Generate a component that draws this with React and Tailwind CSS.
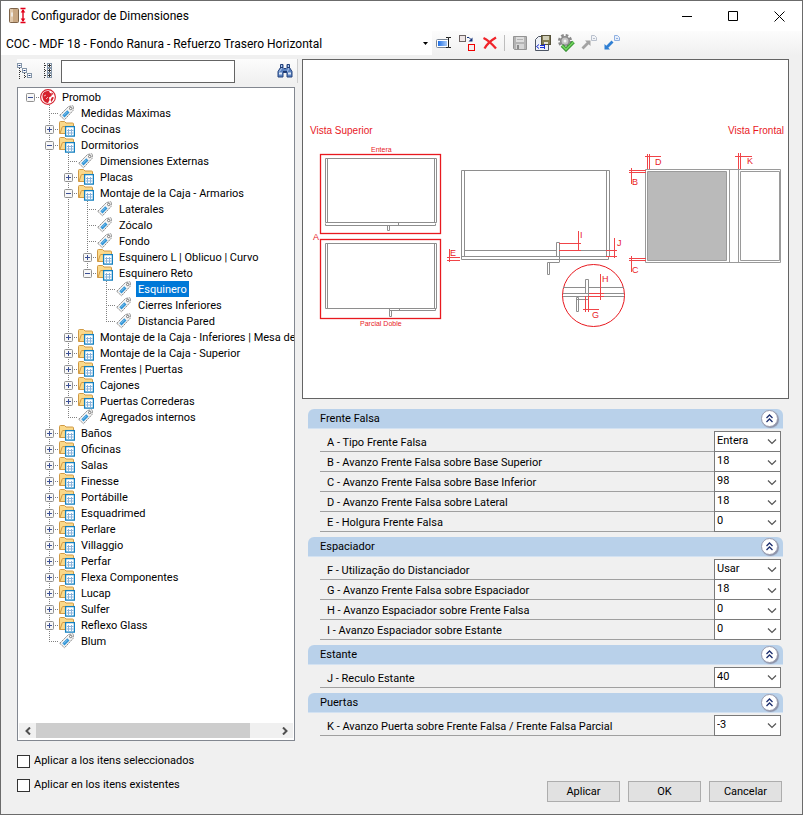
import React, { useState } from 'react';

const tag = (label) => ({ label, type: 'tag' });
const folder = (label, children) => ({ label, type: 'folder', children });

const tree = [
    {
        label: 'Promob',
        type: 'root',
        children: [
            tag('Medidas Máximas'),
            folder('Cocinas'),
            folder('Dormitorios', [
                tag('Dimensiones Externas'),
                folder('Placas'),
                folder('Montaje de la Caja - Armarios', [
                    tag('Laterales'),
                    tag('Zócalo'),
                    tag('Fondo'),
                    folder('Esquinero L | Oblicuo | Curvo'),
                    folder('Esquinero Reto', [
                        tag('Esquinero'),
                        tag('Cierres Inferiores'),
                        tag('Distancia Pared'),
                    ]),
                ]),
                folder('Montaje de la Caja - Inferiores | Mesa de'),
                folder('Montaje de la Caja - Superior'),
                folder('Frentes | Puertas'),
                folder('Cajones'),
                folder('Puertas Correderas'),
                tag('Agregados internos'),
            ]),
            folder('Baños'),
            folder('Oficinas'),
            folder('Salas'),
            folder('Finesse'),
            folder('Portábille'),
            folder('Esquadrimed'),
            folder('Perlare'),
            folder('Villaggio'),
            folder('Perfar'),
            folder('Flexa Componentes'),
            folder('Lucap'),
            folder('Sulfer'),
            folder('Reflexo Glass'),
            tag('Blum'),
        ],
    },
];

const groups = [
    {
        title: 'Frente Falsa',
        rows: [
            ['A - Tipo Frente Falsa', 'Entera'],
            ['B - Avanzo Frente Falsa sobre Base Superior', '18'],
            ['C - Avanzo Frente Falsa sobre Base Inferior', '98'],
            ['D - Avanzo Frente Falsa sobre Lateral', '18'],
            ['E - Holgura Frente Falsa', '0'],
        ],
    },
    {
        title: 'Espaciador',
        rows: [
            ['F - Utilização do Distanciador', 'Usar'],
            ['G - Avanzo Frente Falsa sobre Espaciador', '18'],
            ['H - Avanzo Espaciador sobre Frente Falsa', '0'],
            ['I - Avanzo Espaciador sobre Estante', '0'],
        ],
    },
    { title: 'Estante', rows: [['J - Reculo Estante', '40']] },
    { title: 'Puertas', rows: [['K - Avanzo Puerta sobre Frente Falsa / Frente Falsa Parcial', '-3']] },
];

/* ---------- icons ---------- */

const AppIcon = () => (
    <svg width="18" height="18" viewBox="0 0 18 18">
        <rect x="1.500" y="1.500" width="9" height="14" rx="1" fill="#c9a883" stroke="#7d6348" />
        <rect x="2" y="2" width="3" height="13" fill="#dfc7aa" />
        <path d="M4 5.500v4" stroke="#f6f6f6" strokeWidth="1.500" />
        <path d="M12.500 1.500h5M12.500 15.500h5M15 3v11" stroke="#e2001a" strokeWidth="1.400" />
        <path d="M12.700 5.500l2.300-3.500 2.300 3.500zM12.700 11.500l2.300 3.500 2.300-3.500z" fill="#e2001a" />
    </svg>
);

const RenameIcon = () => (
    <svg width="16" height="16" viewBox="0 0 16 16">
        <defs>
            <linearGradient id="field">
                <stop offset="0" stopColor="#1f6fe5" />
                <stop offset="1" stopColor="#a9cbf8" />
            </linearGradient>
        </defs>
        <rect x="0.500" y="4.500" width="12" height="8" rx="1" fill="#fff" stroke="#7a8696" />
        <rect x="2" y="6" width="9" height="5" fill="url(#field)" />
        <path d="M10 2.500h2.500v10H10M15 2.500h-2.500M15 12.500h-2.500" stroke="#222" fill="none" />
    </svg>
);

const ReplaceIcon = () => (
    <svg width="18" height="18" viewBox="0 0 18 18">
        <rect x="1.500" y="1.500" width="6" height="6" fill="#eee6e6" stroke="#6d6464" />
        <rect x="10.500" y="10.500" width="6" height="6" fill="#f4eeee" stroke="#f00000" />
        <path d="M9 3.500h2l2 2" stroke="#14337c" fill="none" />
        <path d="M14.500 3.500v4h-4z" fill="#14337c" />
    </svg>
);

const DeleteIcon = () => (
    <svg width="16" height="16" viewBox="0 0 16 16">
        <path d="M1.500 3C6 5 10 9 14 13.500M14 2.500C8 6 5 9 2.500 13.500" stroke="#f0242a" strokeWidth="2.300" fill="none" />
    </svg>
);

const SaveIcon = () => (
    <svg width="16" height="16" viewBox="0 0 16 16">
        <path d="M1.500 1.500h13v13h-12l-1-1z" fill="#b4b4b4" stroke="#949494" />
        <rect x="4" y="2" width="8" height="5" fill="#dedede" />
        <path d="M5 4.500h6" stroke="#b4b4b4" />
        <rect x="4" y="9" width="8" height="5" fill="#d6d6d6" />
        <rect x="5" y="10" width="2" height="4" fill="#8a8a8a" />
    </svg>
);

const SaveBinaryIcon = () => (
    <svg width="18" height="18" viewBox="0 0 18 18">
        <path d="M4.500 2.500h10v14h-13v-11z" fill="#eef1f6" stroke="#4d5564" />
        <rect x="7.500" y="1.500" width="9" height="9" fill="#827c52" stroke="#55513a" />
        <rect x="9" y="2" width="6" height="4" fill="#cfcdb6" />
        <rect x="10" y="8" width="4" height="2" fill="#e4e2d0" />
        <path d="M5 10.500l-2.500 2 2.500 2M6 11.500h4M6 13.500h4M10.500 10v5" stroke="#1b2fd6" fill="none" />
    </svg>
);

const GearCheckIcon = () => (
    <svg width="18" height="18" viewBox="0 0 18 18">
        <circle cx="8" cy="7" r="5.800" fill="none" stroke="#8b8b8b" strokeWidth="2.600" strokeDasharray="2.600 1.955" />
        <circle cx="8" cy="7" r="4.300" fill="#c4c4c4" stroke="#8b8b8b" strokeWidth="1.600" />
        <circle cx="8" cy="7" r="1.500" fill="#f6f6f6" />
        <path d="M5 11.500l4 4 7.500-7.500" stroke="#2c8a2a" strokeWidth="3.600" fill="none" />
        <path d="M5 11.500l4 4 7.500-7.500" stroke="#6fcf5c" strokeWidth="1.800" fill="none" />
    </svg>
);

const ExportIcon = () => (
    <svg width="18" height="18" viewBox="0 0 18 18">
        <path d="M11.500 1.500h3l2 2v3h-5z" fill="#f2f4f8" stroke="#b9c0cc" />
        <path d="M13 4.500h2" stroke="#b9c0cc" />
        <path d="M5 6.500h5.500V12L8.700 10.200 3.500 15.500l-2-2 5.200-5.300z" fill="#a3a3a3" />
    </svg>
);

const ImportIcon = () => (
    <svg width="18" height="18" viewBox="0 0 18 18">
        <path d="M11.500 1.500h3l2 2v3h-5z" fill="#e6eefb" stroke="#8fb0e0" />
        <path d="M13 4.500h2" stroke="#8fb0e0" />
        <path d="M7 15.500H1.500V10l1.800 1.800 5.200-5.300 2 2-5.200 5.300z" fill="#2f7fd3" />
    </svg>
);

const CollapseAllIcon = () => (
    <svg width="16" height="16" viewBox="0 0 16 16">
        <path d="M2.500 5v11M3 8.500h3M7.500 10v5M8 13.500h3" stroke="#333" strokeDasharray="1 1" fill="none" />
        <g fill="#fff" stroke="#8495a8">
            <rect x="0.500" y="0.500" width="4" height="4" />
            <rect x="5.500" y="5.500" width="4" height="4" />
            <rect x="10.500" y="10.500" width="4" height="4" />
        </g>
        <path d="M1.500 2.500h2M6.500 7.500h2M11.500 12.500h2" stroke="#1f3d7a" />
    </svg>
);

const ExpandAllIcon = () => (
    <svg width="10" height="16" viewBox="0 0 10 16">
        <path d="M1.500 0v16M2 2.500h2M2 7.500h2M2 12.500h2" stroke="#333" strokeDasharray="1 1" fill="none" />
        <g fill="#fff" stroke="#8495a8">
            <rect x="4.500" y="0.500" width="4" height="4" />
            <rect x="4.500" y="5.500" width="4" height="4" />
            <rect x="4.500" y="10.500" width="4" height="4" />
        </g>
        <path d="M5 2.500h3M5 7.500h3M5 12.500h3M6.500 1v3M6.500 6v3M6.500 11v3" stroke="#333" />
    </svg>
);

const BinocularsIcon = () => (
    <svg width="16" height="16" viewBox="0 0 16 16">
        <path d="M3.500 1.500h2.500v3L7 5.500h2l1-1v-3h2.500v3l2.500 4v5.500h-5V9.500H6V14H1V8.500l2.500-4z" fill="#5b82c0" stroke="#24427c" />
        <path d="M4.500 2v3.500l-2 3M11.500 2v3.500l-1 3" stroke="#b5cbee" fill="none" />
        <path d="M2 10.500h3M11 10.500h3" stroke="#dfe9f8" strokeWidth="2" />
        <path d="M3 4.500h3M10 4.500h3M6 8.500h4" stroke="#1d386e" />
    </svg>
);

const RootIcon = () => (
    <svg width="16" height="16" viewBox="0 0 16 16">
        <circle cx="8" cy="8" r="7.400" fill="#fff" stroke="#d5202c" strokeWidth="1.100" />
        <path d="M2.500 6C3 3 6 1.500 9 2l1 2 2 .5-.5 2.500-2.500 1.500L9.500 11 8 14C5 14 2 11 2.500 6z" fill="#d5202c" />
        <path d="M11.500 3l2 2-1 1zM12 8l2 .5-2.500 4.500-1-2z" fill="#d5202c" />
        <path d="M4 7l2-1M6 10l2-2" stroke="#f7b5b8" />
    </svg>
);

const FolderIcon = () => (
    <svg width="16" height="16" viewBox="0 0 16 16">
        <path d="M0.500 12.500v-11q0-1 1-1h4l1.500 1.500h6.500q1 0 1 1v9.500z" fill="#fbd98a" stroke="#d09a45" />
        <path d="M1 12.500L3 6.500q.3-1 1-1h9" fill="none" stroke="#d09a45" />
        <rect x="6.600" y="5.600" width="8.800" height="9.500" fill="#fff" stroke="#1480c0" strokeWidth="1.300" />
        <path d="M9.500 8v6M12.500 8v6M8 9.500h6.500M8 12h6.500" stroke="#8bb4dc" />
    </svg>
);

const TagIcon = () => (
    <svg width="16" height="16" viewBox="0 0 16 16">
        <path d="M0.800 10.300L9.500 1.500 13.500.8q1 0 1 1L14 5.500 5.500 14.800z" fill="#f4f4f4" stroke="#8a8a8a" strokeDasharray="2 .6" />
        <path d="M3.300 10.300l5-5 2.200 2.200-5 5z" fill="#2d93d6" />
        <path d="M4.800 10.500l3.700-3.700" stroke="#8cc7ee" />
        <circle cx="11.700" cy="3.500" r="1.200" fill="#fff" stroke="#777" />
    </svg>
);

const nodeIcons = { root: RootIcon, folder: FolderIcon, tag: TagIcon };

/* ---------- tree ---------- */

const Guide = ({ up, down, across, sign }) => (
    <svg width="19" height="16" viewBox="0 0 19 16" className="shrink-0">
        <g stroke="#808080" strokeDasharray="1 1" fill="none">
            {up && <path d="M9.500 0v8" />}
            {down && <path d="M9.500 8v8" />}
            {across && <path d="M9 8.500h10" />}
        </g>
        {sign && (
            <>
                <rect x="5.500" y="4.500" width="8" height="8" rx="1" fill="#f7f7f7" stroke="#919191" />
                <path d={sign === '+' ? 'M7 8.500h5M9.500 6v5' : 'M7 8.500h5'} stroke="#3b4f94" />
            </>
        )}
    </svg>
);

const TreeNode = ({ node, trail, first, last, selected, onSelect }) => {
    const [open, setOpen] = useState(Boolean(node.children));
    const Icon = nodeIcons[node.type];
    const isRoot = trail.length === 0;
    const sign = node.type === 'tag' ? null : open ? '-' : '+';
    const active = selected === node.label;

    return (
        <li>
            <div className="flex h-4 items-center" onDoubleClick={() => setOpen(!open)}>
                {trail.map((line, i) => <Guide key={i} up={line} down={line} />)}
                <Guide up={!(isRoot && first)} down={!last} across sign={sign} />
                <span className="w-5 shrink-0"><Icon /></span>
                <button
                    onClick={() => onSelect(node.label)}
                    className={`h-4 px-[2px] text-[11px] leading-[18px] whitespace-nowrap ${active ? 'bg-[#0078d7] text-white' : 'text-black'}`}
                >
                    {node.label}
                </button>
            </div>
            {open && node.children && (
                <ul>
                    {node.children.map((child, i) => (
                        <TreeNode
                            key={child.label}
                            node={child}
                            trail={[...trail, !last]}
                            first={i === 0}
                            last={i === node.children.length - 1}
                            selected={selected}
                            onSelect={onSelect}
                        />
                    ))}
                </ul>
            )}
        </li>
    );
};

/* ---------- drawing of the cabinet ---------- */

const Diagram = () => (
    <svg viewBox="303 60 485 338" className="block w-full font-['Liberation_Sans',Arial,sans-serif]">
        <g fill="#e8191f">
            <text x="310" y="134" fontSize="10">Vista Superior</text>
            <text x="728" y="134" fontSize="10">Vista Frontal</text>
            <text x="371" y="152" fontSize="7">Entera</text>
            <text x="360" y="326" fontSize="7">Parcial Doble</text>
            <g fontSize="9">
                <text x="313" y="240">A</text>
                <text x="450" y="256">E</text>
                <text x="580" y="238">I</text>
                <text x="617" y="246">J</text>
                <text x="602" y="282">H</text>
                <text x="592" y="318">G</text>
                <text x="632" y="185">B</text>
                <text x="632" y="273">C</text>
                <text x="655" y="165">D</text>
                <text x="747" y="164">K</text>
            </g>
        </g>

        <g fill="none" stroke="#e8191f">
            <rect x="320.500" y="154.500" width="120" height="79" strokeWidth="1.300" />
            <rect x="320.500" y="239.500" width="120" height="79" strokeWidth="1.300" />
            <circle cx="593.500" cy="295.500" r="31" />
        </g>

        {/* top views */}
        <g fill="none" stroke="#8e8e8e">
            <path d="M325.500 158.500h111v64h-111zM327.500 158.500v64M434.500 158.500v64" />
            <path d="M325.500 223.500v2h110v-2M398.500 223v2M387.500 225.500h2v5h-2z" />
            <path d="M325.500 243.500h111v65h-111zM327.500 243.500v65M434.500 243.500v65" />
            <path d="M389.500 308.500v2h46v-2M399.500 309v1M389.500 310.500h2v6h-2z" />
        </g>

        {/* section */}
        <g fill="none" stroke="#8e8e8e">
            <path d="M461.500 257v-86.500h148v86.500M464.500 171v86M606.500 171v86" />
            <path d="M464 250.500h92M560 250.500h46M461 256.500h145M461.500 257v2.500h147v-2.500" />
            <path d="M556.500 256.500v-14h3v19.500M559.500 262.500h-12v12h2v-12" />
            <path d="M563 287.500h22M588 287.500h36M563 293.500h61M563 296.500h61" />
            <path d="M585.500 293.500v-14h3v17M576.500 311.500v-14h2v14zM576.500 299.500h12" />
        </g>

        {/* front view */}
        <g fill="none" stroke="#9a9a9a">
            <path d="M647.500 171.500h79v89h-79z" fill="#bababa" />
            <path d="M645.500 169.500h135v93h-135zM729.500 169.500v93M738.500 169.500v93M740.500 171.500h39v89h-39z" />
        </g>

        {/* dimension marks */}
        <g fill="none" stroke="#f04448">
            <path d="M449.500 249v13M447 257.500h13M447 260.500h13" />
            <path d="M578.500 231v20M559 243.500h22M559 250.500h22" />
            <path d="M614.500 238v20M606 250.500h11M606 256.500h11" />
            <path d="M600.500 274v26M589 293.500h15M589 296.500h15" />
            <path d="M585.500 296v16M588.500 296v16M583 309.500h16" />
            <path d="M631.500 168v16M629 170.500h17M629 172.500h17" />
            <path d="M631.500 256v16M629 258.500h17M629 260.500h17" />
            <path d="M647.500 154v15M649.500 154v15M645 156.500h16" />
            <path d="M738.500 153v16M740.500 153v16M735 156.500h17" />
        </g>
    </svg>
);

/* ---------- properties ---------- */

const PropertyGroup = ({ title, rows }) => {
    const [open, setOpen] = useState(true);

    return (
        <section>
            <header className="flex h-5 items-center justify-between rounded-t-md border-b border-[#d3e2f2] bg-[#b9d1ea] pr-[5px] pl-3">
                <h2 className="text-[11px] leading-5">{title}</h2>
                <button
                    aria-label={title}
                    onClick={() => setOpen(!open)}
                    className="flex h-[17px] w-[17px] items-center justify-center rounded-full border border-[#9a9db0] bg-white shadow-[1px_1px_1px_#8a8fa5]"
                >
                    <svg width="9" height="9" viewBox="0 0 9 9" fill="none" stroke="#1d2f6f" strokeWidth="1.300">
                        <path d="M1.500 4l3-3 3 3M1.500 8l3-3 3 3" />
                    </svg>
                </button>
            </header>
            {open && (
                <div className="mt-[2px] mr-[2px] ml-3 border-t border-transparent">
                    {rows.map(([label, value], i) => {
                        const id = `prop-${label[0]}`;
                        return (
                            <div key={id} className="flex h-5 items-stretch">
                                <label htmlFor={id} className="flex-1 border-b border-[#a0a0a0] pl-[7px] text-[11px] leading-[22px]">
                                    {label}
                                </label>
                                <div className={`relative w-[67px] ${i === 0 ? '-mt-px' : ''}`}>
                                    <select
                                        id={id}
                                        defaultValue={value}
                                        className={`block h-full w-full appearance-none border-x border-b border-[#7a7a7a] bg-white pb-[2px] pl-[2px] text-[11px] leading-4 outline-none ${i === 0 ? 'border-t' : ''}`}
                                    >
                                        <option>{value}</option>
                                    </select>
                                    <svg width="10" height="6" viewBox="0 0 10 6" className="pointer-events-none absolute top-2 right-1" fill="none" stroke="#555">
                                        <path d="M1 .5l4 4 4-4" strokeWidth="1.200" />
                                    </svg>
                                </div>
                            </div>
                        );
                    })}
                </div>
            )}
        </section>
    );
};

const ToolButton = ({ label, children }) => (
    <button aria-label={label} className="flex h-6 w-[23px] items-center justify-center">{children}</button>
);

const App = () => {
    const [selected, setSelected] = useState('Esquinero');

    return (
        <div className="flex min-h-screen flex-col border border-[#6b6b6b] bg-[#f0f0f0] font-['Roboto','Liberation_Sans',sans-serif] text-black">
            <div className="flex h-[30px] items-center bg-white pl-[7px]">
                <AppIcon />
                <h1 className="ml-[5px] flex-1 text-[12px]">Configurador de Dimensiones</h1>
                <button aria-label="Minimizar" className="flex h-full w-[46px] items-center justify-center">
                    <svg width="10" height="10" stroke="#000"><path d="M0 5.500h10" /></svg>
                </button>
                <button aria-label="Maximizar" className="flex h-full w-[46px] items-center justify-center">
                    <svg width="10" height="10" stroke="#000" fill="none"><path d="M.5.5h9v9h-9z" /></svg>
                </button>
                <button aria-label="Cerrar" className="flex h-full w-[46px] items-center justify-center">
                    <svg width="11" height="11" stroke="#000" fill="none"><path d="M.5.5l10 10M10.500.5l-10 10" /></svg>
                </button>
            </div>

            <div className="flex h-6 items-center bg-linear-to-b from-[#fcfcfc] to-[#f0f0f0]">
                <div className="relative h-full w-[431px] bg-white">
                    <select
                        aria-label="Configuración"
                        className="h-full w-full appearance-none pl-[5px] text-[12px] outline-none"
                    >
                        <option>COC - MDF 18 - Fondo Ranura - Refuerzo Trasero Horizontal</option>
                    </select>
                    <svg width="5" height="3" className="pointer-events-none absolute top-[11px] right-1"><path d="M0 0h5L2.500 3z" /></svg>
                </div>
                <ToolButton label="Renombrar"><RenameIcon /></ToolButton>
                <ToolButton label="Reemplazar"><ReplaceIcon /></ToolButton>
                <ToolButton label="Eliminar"><DeleteIcon /></ToolButton>
                <span className="mx-[3px] h-4 w-px bg-[#bdbdbd]" />
                <div className="flex">
                    <ToolButton label="Guardar"><SaveIcon /></ToolButton>
                    <ToolButton label="Guardar binario"><SaveBinaryIcon /></ToolButton>
                    <ToolButton label="Validar"><GearCheckIcon /></ToolButton>
                    <ToolButton label="Exportar"><ExportIcon /></ToolButton>
                    <ToolButton label="Importar"><ImportIcon /></ToolButton>
                </div>
            </div>

            <div className="flex flex-1 gap-[7px] pt-1 pr-[13px] pl-4">
                <div className="flex w-[278px] flex-col">
                    <div className="-mr-[3px] flex h-6 items-center border-r border-[#cfcfcf] bg-linear-to-b from-[#fcfcfc] to-[#f0f0f0]">
                        <button aria-label="Contraer todo"><CollapseAllIcon /></button>
                        <button aria-label="Expandir todo" className="ml-[10px]"><ExpandAllIcon /></button>
                        <input aria-label="Buscar" className="ml-2 h-[23px] w-[174px] border border-[#646464] bg-white px-1 text-[11px] outline-none" />
                        <button aria-label="Buscar siguiente" className="mr-1 ml-auto"><BinocularsIcon /></button>
                    </div>

                    <div className="mt-1 flex flex-1 flex-col border border-[#828790] bg-white pt-px">
                        <ul className="flex-1 overflow-hidden pl-[3px]">
                            {tree.map((node, i) => (
                                <TreeNode
                                    key={node.label}
                                    node={node}
                                    trail={[]}
                                    first={i === 0}
                                    last={i === tree.length - 1}
                                    selected={selected}
                                    onSelect={setSelected}
                                />
                            ))}
                        </ul>
                        <div className="mx-px mb-[2px] flex h-[15px] bg-[#f0f0f0]">
                            <button aria-label="Izquierda" className="flex w-[17px] items-center justify-center">
                                <svg width="6" height="8" fill="none" stroke="#505050" strokeWidth="2"><path d="M5 .5L1.500 4 5 7.500" /></svg>
                            </button>
                            <div className="flex-1"><div className="h-full w-[89%] bg-[#cdcdcd]" /></div>
                            <button aria-label="Derecha" className="flex w-[17px] items-center justify-center">
                                <svg width="6" height="8" fill="none" stroke="#505050" strokeWidth="2"><path d="M1 .5L4.500 4 1 7.500" /></svg>
                            </button>
                        </div>
                    </div>
                </div>

                <div className="min-w-0 flex-1">
                    <div className="border border-[#646464] bg-white">
                        <Diagram />
                    </div>
                    <div className="mt-[10px] mr-[6px] ml-[6px] flex flex-col gap-[5px]">
                        {groups.map(group => <PropertyGroup key={group.title} {...group} />)}
                    </div>
                </div>
            </div>

            <div className="flex items-end justify-between pt-[14px] pr-5 pb-3 pl-4">
                <div className="flex flex-col gap-[11px] pb-[10px] text-[11px]">
                    {['Aplicar a los itens seleccionados', 'Aplicar en los itens existentes'].map(label => (
                        <label key={label} className="flex h-[13px] items-center gap-1">
                            <input type="checkbox" className="h-[13px] w-[13px] appearance-none border border-[#333] bg-white checked:bg-[#0078d7]" />
                            {label}
                        </label>
                    ))}
                </div>
                <div className="flex gap-2 text-[11px]">
                    {['Aplicar', 'OK', 'Cancelar'].map(label => (
                        <button key={label} className="h-[21px] w-[73px] border border-[#adadad] bg-[#e1e1e1] leading-4">{label}</button>
                    ))}
                </div>
            </div>
        </div>
    );
};

export default App;
